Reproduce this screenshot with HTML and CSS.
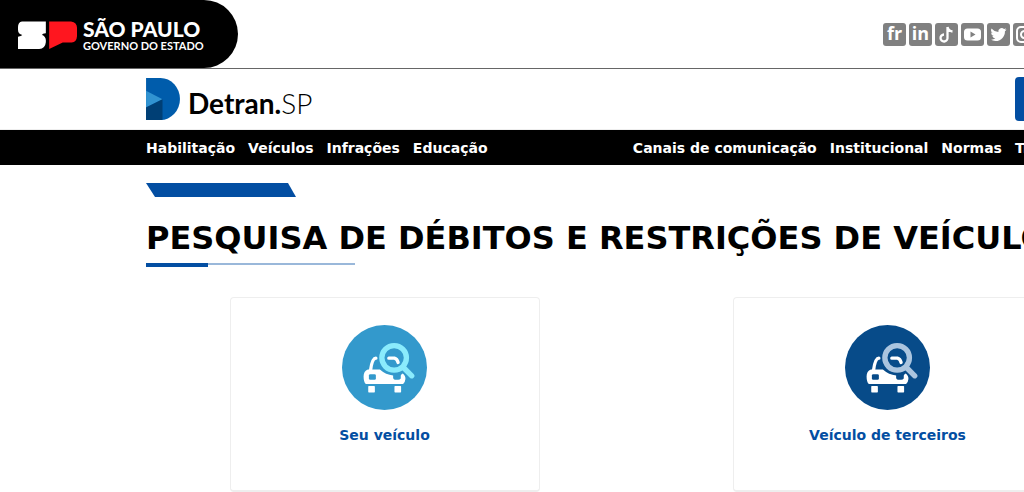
FILE: index.html
```html
<!DOCTYPE html>
<html lang="pt-BR">
<head>
    <meta charset="UTF-8">
    <meta name="viewport" content="width=device-width, initial-scale=1.0">
    <title>Detran.SP</title>
    <link rel="stylesheet" href="styles.css">
</head>
<body>
    <div class="page">
        <header class="topbar">
            <a class="gov" href="#">
                <svg class="gov-mark" viewBox="54 64 178 84" aria-hidden="true">
                    <path fill="#fff" d="M66 65H138V101Q127 102 127 106Q137 110 138 121V128Q136 148 118 148H54V111Q64 110 67 106Q54 103 54 90V82Q54 67 66 65Z"/>
                    <path fill="#ff161f" d="M148 65H214Q232 68 232 84V110Q231 127 216 129H189L148 148Z"/>
                </svg>
                <span class="gov-text">
                    <span class="gov-name">SÃO PAULO</span>
                    <span class="gov-sub">GOVERNO DO ESTADO</span>
                </span>
            </a>
            <nav class="social">
                <a href="#" aria-label="Flickr"><span class="social-text">fr</span></a>
                <a href="#" aria-label="LinkedIn"><span class="social-text">in</span></a>
                <a href="#" aria-label="TikTok">
                    <svg viewBox="0 0 23 23"><path d="M12.500 4V14.500A3.500 3.500 0 1 1 9 11.500M12.500 4Q13.500 8 17.500 8.500" fill="none" stroke="#fff" stroke-width="2.300"/></svg>
                </a>
                <a href="#" aria-label="YouTube">
                    <svg viewBox="0 0 23 23"><rect x="3" y="5.500" width="17" height="12" rx="3.500" fill="#fff"/><path d="M9.500 8.500L14.500 11.500L9.500 14.500Z" fill="#808080"/></svg>
                </a>
                <a href="#" aria-label="Twitter">
                    <svg viewBox="0 0 23 23"><path transform="translate(3.500 3.500) scale(.67)" fill="#fff" d="M23.950 4.570a10 10 0 0 1-2.820.770 4.960 4.960 0 0 0 2.160-2.720c-.950.550-2 .960-3.130 1.180a4.920 4.920 0 0 0-8.380 4.480C7.690 8.100 4.070 6.130 1.640 3.160a4.920 4.920 0 0 0 1.520 6.570 4.900 4.900 0 0 1-2.230-.610v.060a4.920 4.920 0 0 0 3.950 4.830 5 5 0 0 1-2.210.080 4.940 4.940 0 0 0 4.600 3.420A9.870 9.870 0 0 1 0 19.540a13.990 13.990 0 0 0 7.550 2.210c9.050 0 14-7.500 14-13.980 0-.210 0-.420-.020-.630a9.940 9.940 0 0 0 2.420-2.570z"/></svg>
                </a>
                <a href="#" aria-label="Instagram">
                    <svg viewBox="0 0 23 23"><g fill="none" stroke="#fff" stroke-width="2"><rect x="4" y="4" width="15" height="15" rx="4"/><circle cx="11.500" cy="11.500" r="3.500"/></g><circle cx="15.800" cy="7.300" r="1" fill="#fff"/></svg>
                </a>
            </nav>
        </header>

        <div class="brandbar">
            <div class="container brandbar-inner">
                <a class="brand" href="#">
                    <svg class="brand-mark" viewBox="48 37 101 125" aria-hidden="true">
                        <path fill="#005cab" d="M48 37H91A58 62.500 0 0 1 91 162H48Z"/>
                        <path fill="#3193d1" d="M48 75L97 100L48 125Z"/>
                        <path fill="#003f75" d="M48 125L97 100V162H48Z"/>
                    </svg>
                    <span class="brand-name">Detran.<span class="brand-sp">SP</span></span>
                </a>
                <button class="login" type="button" aria-label="Entrar"></button>
            </div>
        </div>

        <nav class="menu">
            <div class="container menu-inner">
                <ul class="menu-list">
                    <li><a href="#">Habilitação</a></li>
                    <li><a href="#">Veículos</a></li>
                    <li><a href="#">Infrações</a></li>
                    <li><a href="#">Educação</a></li>
                </ul>
                <ul class="menu-list">
                    <li><a href="#">Canais de comunicação</a></li>
                    <li><a href="#">Institucional</a></li>
                    <li><a href="#">Normas</a></li>
                    <li><a href="#">Transparência</a></li>
                </ul>
            </div>
        </nav>

        <main class="container">
            <div class="ribbon"></div>
            <h1 class="title">PESQUISA DE DÉBITOS E RESTRIÇÕES DE VEÍCULOS</h1>
            <div class="rule"></div>

            <div class="cards">
                <a class="card card-own" href="#">
                    <svg class="card-icon" viewBox="53 44 256 256" aria-hidden="true">
                        <circle class="disc" cx="181" cy="172" r="128"/>
                        <path fill="none" stroke="#fff" stroke-width="10" stroke-linecap="round" d="M139 180Q144 144 155 144M194 144H211Q219 146 222 157"/>
                        <path fill="#fff" d="M131 178H167Q185 194 207 196H229L235 190Q245 196 244 207Q243 218 237 222H125Q118 216 118 199Q118 183 131 178Z"/>
                        <rect class="disc" x="134" y="192" width="21" height="17" rx="4"/>
                        <path class="disc" d="M207 192H230V205Q227 209 222 209H212Q207 208 207 203Z"/>
                        <rect x="132" y="228" width="20" height="19" rx="2" fill="#fff"/>
                        <rect x="211" y="228" width="20" height="19" rx="2" fill="#fff"/>
                        <circle class="lens" cx="210" cy="143" r="37"/>
                        <path class="lens" stroke-linecap="round" d="M238 172L263 197"/>
                    </svg>
                    <span>Seu veículo</span>
                </a>
                <a class="card card-other" href="#">
                    <svg class="card-icon" viewBox="53 44 256 256" aria-hidden="true">
                        <circle class="disc" cx="181" cy="172" r="128"/>
                        <path fill="none" stroke="#fff" stroke-width="10" stroke-linecap="round" d="M139 180Q144 144 155 144M194 144H211Q219 146 222 157"/>
                        <path fill="#fff" d="M131 178H167Q185 194 207 196H229L235 190Q245 196 244 207Q243 218 237 222H125Q118 216 118 199Q118 183 131 178Z"/>
                        <rect class="disc" x="134" y="192" width="21" height="17" rx="4"/>
                        <path class="disc" d="M207 192H230V205Q227 209 222 209H212Q207 208 207 203Z"/>
                        <rect x="132" y="228" width="20" height="19" rx="2" fill="#fff"/>
                        <rect x="211" y="228" width="20" height="19" rx="2" fill="#fff"/>
                        <circle class="lens" cx="210" cy="143" r="37"/>
                        <path class="lens" stroke-linecap="round" d="M238 172L263 197"/>
                    </svg>
                    <span>Veículo de terceiros</span>
                </a>
            </div>
        </main>
    </div>
</body>
</html>
```
FILE: styles.css
```css
* {
    box-sizing: border-box;
}

body {
    margin: 0;
    overflow: hidden;
    background: #fff;
    color: #000;
    font-family: Verdana, "DejaVu Sans", sans-serif;
    font-size: 14px;
    font-weight: bold;
}

a {
    color: inherit;
    text-decoration: none;
}

/* desktop layout, does not shrink below the content */
.page {
    min-width: 1272px;
}

.container {
    max-width: 980px;
    margin: 0 auto;
}

/* top bar */
.topbar {
    display: flex;
    justify-content: space-between;
    align-items: center;
    border-bottom: 1px solid #666;
    padding-right: 236px;
}

.gov {
    display: flex;
    align-items: center;
    gap: 6px;
    height: 68px;
    padding: 2px 34px 0 18px;
    background: #000;
    color: #fff;
    border-radius: 0 34px 34px 0;
    font-family: Lato, sans-serif;
}

.gov-mark {
    width: 59px;
    height: 28px;
}

.gov-text {
    display: flex;
    flex-direction: column;
}

.gov-name {
    font-size: 21px;
    font-weight: 900;
    line-height: 20px;
}

.gov-sub {
    font-size: 11px;
    font-weight: bold;
    line-height: 13px;
}

.social {
    display: flex;
    gap: 3px;
}

.social a {
    display: flex;
    align-items: center;
    justify-content: center;
    width: 23px;
    height: 23px;
    border-radius: 3px;
    background: #808080;
    color: #fff;
}

.social-text {
    padding-bottom: 2px;
    font-family: "Open Sans", sans-serif;
    font-size: 18px;
    line-height: 20px;
}

/* brand */
.brandbar {
    border-bottom: 1px solid #eee;
}

.brandbar-inner {
    display: flex;
    justify-content: space-between;
    align-items: center;
    height: 60px;
}

.brand {
    display: flex;
    align-items: center;
    gap: 8px;
}

.brand-mark {
    width: 34px;
    height: 42px;
}

.brand-name {
    padding-top: 8px;
    font-family: Lato, sans-serif;
    font-size: 28px;
    line-height: 34px;
}

.brand-sp {
    font-weight: 300;
}

.login {
    width: 111px;
    height: 44px;
    border: 0;
    border-radius: 4px;
    background: #034ea2;
}

/* menu */
.menu {
    background: #000;
    color: #fff;
}

.menu-inner {
    display: flex;
    justify-content: space-between;
}

.menu-list {
    display: flex;
    gap: 13px;
    margin: 0;
    padding: 2px 0 0;
    list-style: none;
    line-height: 33px;
}

/* content */
.ribbon {
    width: 150px;
    height: 14px;
    margin-top: 18px;
    background: #034ea2;
    clip-path: polygon(0 0, 142px 0, 100% 100%, 9px 100%);
}

.title {
    margin: 20px 0 4px;
    font-size: 32px;
    line-height: 42px;
    white-space: nowrap;
}

.rule {
    width: 209px;
    height: 4px;
    background: linear-gradient(#034ea2, #034ea2) 0 0 / 62px 4px no-repeat, linear-gradient(#9ab8da, #9ab8da) 0 0 / 100% 2px no-repeat;
}

.cards {
    display: flex;
    justify-content: center;
    gap: 193px;
    margin-top: 30px;
}

.card {
    display: flex;
    flex-direction: column;
    align-items: center;
    gap: 15px;
    width: 310px;
    padding: 27px 0 45px;
    border: 1px solid #eee;
    border-bottom-width: 2px;
    border-radius: 4px;
    color: #034ea2;
    line-height: 20px;
}

.card-icon {
    width: 85px;
    height: 85px;
}

.lens {
    fill: none;
    stroke-width: 16;
}

.card-own .disc {
    fill: #3399cc;
}

.card-own .lens {
    stroke: #8aebfc;
}

.card-other .disc {
    fill: #074b89;
}

.card-other .lens {
    stroke: #abc5df;
}
```
